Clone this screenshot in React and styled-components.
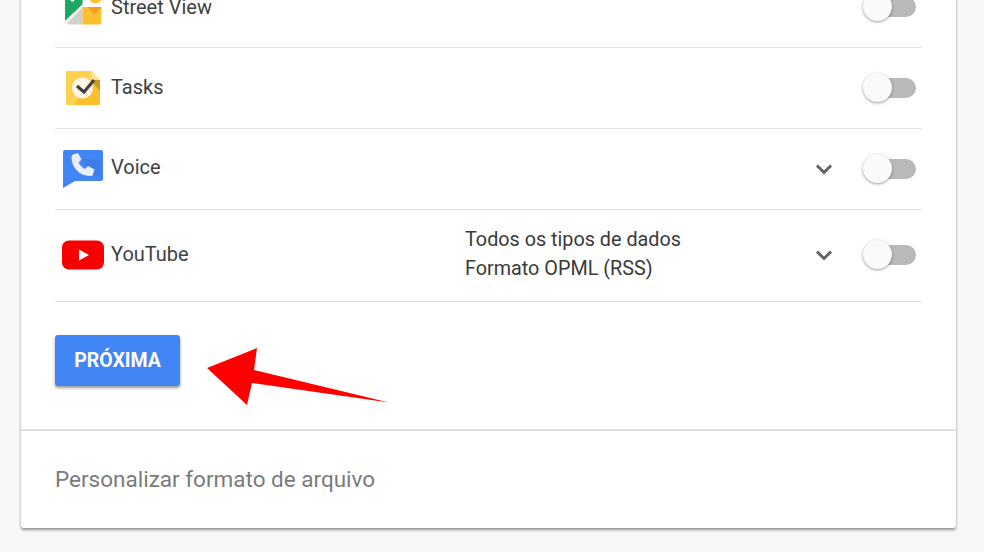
import styled, { createGlobalStyle } from "styled-components";

const GlobalStyle = createGlobalStyle`
	html, body {
		margin: 0;
		height: 552px;
		overflow: hidden;
		background: #f8f8f8;
		font-family: Roboto, "Liberation Sans", sans-serif;
	}
`;

const Page = styled.div`
	position: relative;
	width: 984px;
	height: 552px;
	overflow: hidden;
	padding: 0 28px 0 21px;
	box-sizing: border-box;
`;

const Card = styled.section`
	margin-top: -34px;
	height: 562px;
	box-sizing: border-box;
	display: flex;
	flex-direction: column;
	background: #fff;
	border-radius: 3px;
	box-shadow: 0 2px 3px rgba(0, 0, 0, 0.42);
`;

const List = styled.div`
	padding: 0 34px;
`;

const Row = styled.div`
	display: flex;
	align-items: center;
	box-sizing: border-box;
	height: ${ props => props.$height }px;
	padding-bottom: ${ props => props.$lift || 0 }px;
	border-bottom: 1px solid #e2e2e2;
`;

const IconCell = styled.div`
	flex: 0 0 56px;
	display: flex;
	justify-content: center;
	align-items: center;
`;

const Name = styled.span`
	flex: 0 0 354px;
	font-size: 20px;
	line-height: 24px;
	color: #3f3f3f;
	padding-bottom: ${ props => props.$lift || 0 }px;
`;

const Detail = styled.div`
	flex: 1;
	font-size: 19.8px;
	line-height: 29px;
	color: #3a3a3a;
	padding-bottom: 2px;
`;

const Chevron = styled.svg`
	flex: 0 0 18px;
	width: 18px;
	height: 12px;
	margin-right: 30px;
	fill: none;
	stroke: #636363;
	stroke-width: 3;
`;

const Toggle = styled.div`
	position: relative;
	flex: 0 0 53px;
	width: 53px;
	height: 30px;
	margin-right: 6px;
`;

const Track = styled.div`
	position: absolute;
	top: 5px;
	right: 0;
	width: 38px;
	height: 20px;
	border-radius: 10px;
	background: #b9b9b9;
`;

const Thumb = styled.div`
	position: absolute;
	top: 0;
	left: 0;
	width: 29px;
	height: 29px;
	border-radius: 50%;
	background: #fafafa;
	box-shadow: 0 1px 3px rgba(0, 0, 0, 0.4);
`;

const NextButton = styled.button`
	display: block;
	width: 125px;
	height: 51px;
	margin: 33px 0 43px;
	padding: 0;
	border: 0;
	border-radius: 3px;
	background: #4285f4;
	box-shadow: 0 2px 3px rgba(0, 0, 0, 0.4);
	color: #fff;
	font-family: inherit;
	font-size: 19.500px;
	font-weight: 700;
`;

const Footer = styled.div`
	flex: 1;
	display: flex;
	align-items: center;
	padding: 0 34px 2px;
	border-top: 2px solid #e0e0e0;
	font-size: 22.500px;
	color: #7b7b7b;
`;

const Arrow = styled.svg`
	position: absolute;
	left: 200px;
	top: 340px;
	width: 200px;
	height: 70px;
`;

const StreetViewIcon = () => (
	<svg width="38" height="37" viewBox="0 0 38 37">
		<path d="M1 33V3a2 2 0 0 1 2-2h15.500v15.500z" fill="#1aa863" />
		<circle cx="8.500" cy="11.500" r="2" fill="#fff" />
		<path d="M1 33 L18.500 16.500 V19.500 L3 35 H1z" fill="#f1f1f1" />
		<path d="M3 35.500 L18.500 19.500 V36.500 H5z" fill="#cfcfcf" />
		<path d="M18.500 19 H37.500 V34.500a2 2 0 0 1-2 2h-17z" fill="#fbc02d" />
		<path d="M23.500 19 H37.500 L30.500 26.500z" fill="#f79a1e" />
		<circle cx="31.500" cy="9.500" r="6" fill="#fbc02d" />
	</svg>
);

const TasksIcon = () => (
	<svg width="34" height="34" viewBox="0 0 34 34">
		<path d="M1 0h24l9 9v24a1 1 0 0 1-1 1H1a1 1 0 0 1-1-1V1a1 1 0 0 1 1-1z" fill="#fbc02d" />
		<path d="M1 0h24v9l-17 25H1a1 1 0 0 1-1-1V1a1 1 0 0 1 1-1z" fill="#fdd04f" />
		<path d="M25 0l9 9h-9z" fill="#fde293" />
		<path d="M25 9h9v11z" fill="#c79a22" />
		<circle cx="16.500" cy="17" r="10.500" fill="#fbf6e7" />
		<path d="M11 15l7 6 10-12" fill="none" stroke="#3f3f3f" strokeWidth="3" />
	</svg>
);

const VoiceIcon = () => (
	<svg width="40" height="38" viewBox="0 0 40 38">
		<path d="M2 0h36a2 2 0 0 1 2 2v27a2 2 0 0 1-2 2H12L0 38V2a2 2 0 0 1 2-2z" fill="#4285f4" />
		<path d="M18 9l14 17h4a2 2 0 0 0 2-2V10z" fill="#3a76d8" opacity="0.5" />
		<path d="M10 4.500l5-1.500 3.500 6.500-3 3c1.500 3 3.500 5 6.500 6.500l3-3 6.500 3.500-1.500 5c-0.500 1-1.500 1.500-3 1.500C16 26 8.500 17 8.500 7c0-1.200 0.500-2 1.500-2.500z" fill="#e8eefb" />
	</svg>
);

const YouTubeIcon = () => (
	<svg width="42" height="30" viewBox="0 0 42 30">
		<rect width="42" height="29" y="0.500" rx="7" fill="#f70000" />
		<path d="M17 9.500l10 5.500-10 5.500z" fill="#fff" />
	</svg>
);

const SwitchControl = () => (
	<Toggle>
		<Track />
		<Thumb />
	</Toggle>
);

const ExpandIcon = () => (
	<Chevron viewBox="0 0 18 12">
		<path d="M2 2.500l7 7 7-7" />
	</Chevron>
);

/**
 * Export step of the data download page, with the list of products.
 * @returns {JSX.Element} The element.
 */
const App = () => (
	<Page>
		<GlobalStyle />
		<Card>
			<List>
				<Row $height={ 82 }>
					<IconCell><StreetViewIcon /></IconCell>
					<Name>Street View</Name>
					<Detail />
					<SwitchControl />
				</Row>
				<Row $height={ 81 }>
					<IconCell><TasksIcon /></IconCell>
					<Name $lift={ 2 }>Tasks</Name>
					<Detail />
					<SwitchControl />
				</Row>
				<Row $height={ 81 }>
					<IconCell><VoiceIcon /></IconCell>
					<Name $lift={ 4 }>Voice</Name>
					<Detail />
					<ExpandIcon />
					<SwitchControl />
				</Row>
				<Row $height={ 92 } $lift={ 2 }>
					<IconCell><YouTubeIcon /></IconCell>
					<Name $lift={ 2 }>YouTube</Name>
					<Detail>
						Todos os tipos de dados
						<br />
						Formato OPML (RSS)
					</Detail>
					<ExpandIcon />
					<SwitchControl />
				</Row>
				<NextButton>PRÓXIMA</NextButton>
			</List>
			<Footer>Personalizar formato de arquivo</Footer>
		</Card>
		<Arrow viewBox="200 340 200 70">
			<polygon points="207,368 257,348 254,370 389,402.500 252,383 247,405" fill="#fe0000" />
		</Arrow>
	</Page>
);

export default App;
